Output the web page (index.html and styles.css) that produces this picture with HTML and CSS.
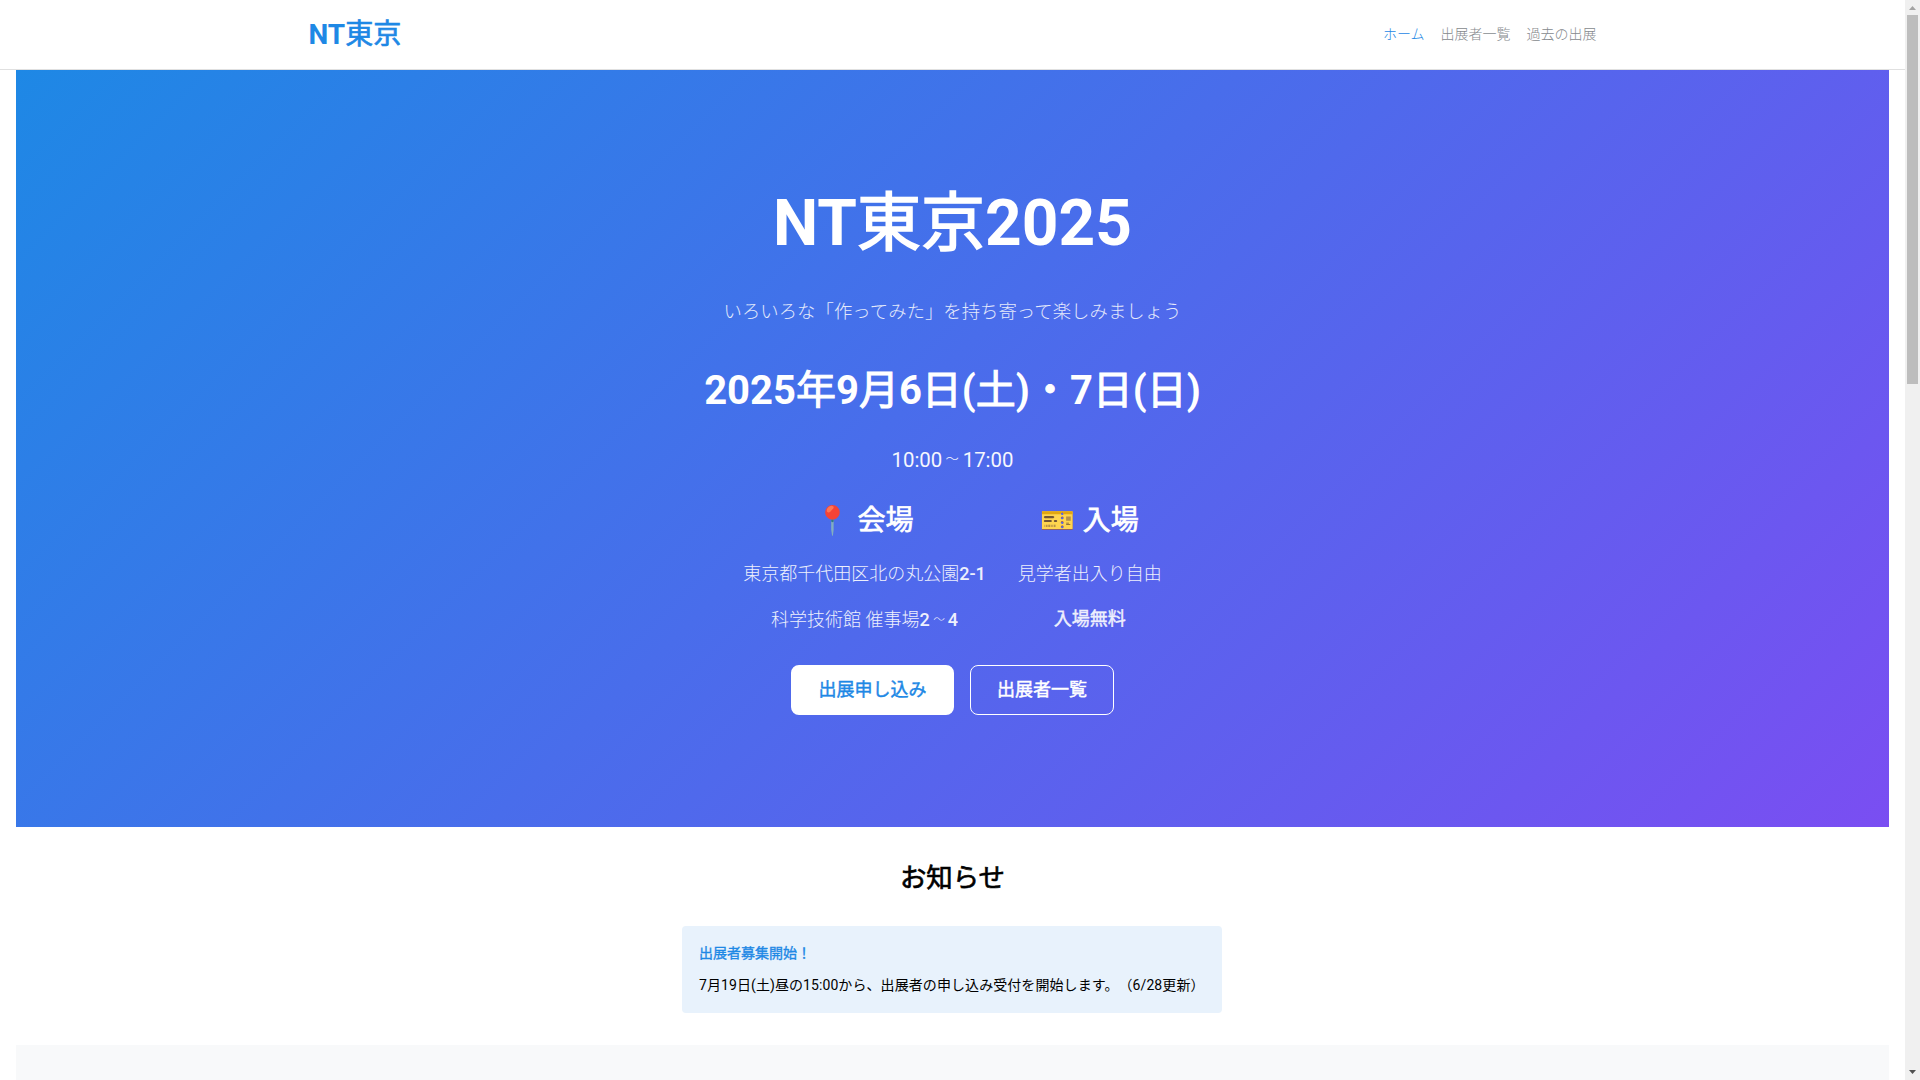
FILE: index.html
```html
<!DOCTYPE html>
<html lang="ja">
<head>
<meta charset="utf-8">
<title>NT東京2025</title>
<link rel="stylesheet" href="styles.css">
</head>
<body>
<header class="site-header">
  <div class="header-inner">
    <a class="logo" href="#">NT<span class="heavy">東京</span></a>
    <nav class="nav">
      <a class="nav-link active" href="#">ホーム</a>
      <a class="nav-link" href="#">出展者一覧</a>
      <a class="nav-link" href="#">過去の出展</a>
    </nav>
  </div>
</header>
<main class="main">
  <section class="hero">
    <h1 class="hero-title">NT<span class="heavy">東京</span>2025</h1>
    <p class="hero-sub">いろいろな「作ってみた」を持ち寄って楽しみましょう</p>
    <p class="hero-date">2025<span class="heavy">年</span>9<span class="heavy">月</span>6<span class="heavy">日</span>(<span class="heavy">土</span>)<span class="heavy">・</span>7<span class="heavy">日</span>(<span class="heavy">日</span>)</p>
    <p class="hero-time">10:00<span class="tilde">～</span>17:00</p>
    <div class="info">
      <div class="info-col">
        <h2 class="info-title"><span class="emoji">📍</span> <span class="heavy">会場</span></h2>
        <p class="info-line"><span class="plain">東京都千代田区北の丸公園</span>2-1</p>
        <p class="info-line"><span class="plain">科学技術館 催事場</span>2<span class="tilde">～</span>4</p>
      </div>
      <div class="info-col">
        <h2 class="info-title"><span class="emoji">🎫</span> <span class="heavy">入場</span></h2>
        <p class="info-line"><span class="plain">見学者出入り自由</span></p>
        <p class="info-line"><span class="heavy">入場無料</span></p>
      </div>
    </div>
    <div class="actions">
      <a class="btn btn-solid" href="#">出展申し込み</a>
      <a class="btn btn-outline" href="#">出展者一覧</a>
    </div>
  </section>
  <section class="news">
    <h2 class="news-title"><span class="heavy">お知らせ</span></h2>
    <div class="news-card">
      <h3 class="news-head"><span class="heavy">出展者募集開始！</span></h3>
      <p class="news-body">7月19日(土)昼の15:00から、出展者の申し込み受付を開始します。（6/28更新）</p>
    </div>
  </section>
  <section class="next"></section>
</main>
<aside class="scrollbar" aria-hidden="true">
  <svg class="scroll-btn" viewBox="0 0 15 15"><polygon points="4,10 11,10 7.5,6" fill="#a3a3a3"/></svg>
  <div class="scroll-thumb"></div>
  <div class="scroll-rest"></div>
  <svg class="scroll-btn" viewBox="0 0 15 15"><polygon points="4,5 11,5 7.5,9" fill="#505050"/></svg>
</aside>
</body>
</html>
```
FILE: styles.css
```css
* { box-sizing: border-box; }
body {
  margin: 0;
  padding-right: 15px;
  background: #fff;
  color: #000;
  font-family: Roboto, "Noto Sans CJK JP", "Noto Color Emoji", sans-serif;
  font-size: 16px;
  text-spacing-trim: space-all;
}
a { text-decoration: none; }
h1, h2, h3, p { margin: 0; }
.heavy { font-weight: 400; -webkit-text-stroke: .025em currentColor; }
.plain { font-weight: 300; }
.scrollbar {
  position: fixed;
  top: 0;
  right: 0;
  width: 15px;
  height: 100vh;
  display: flex;
  flex-direction: column;
  background: #f0f0f0;
}
.scroll-btn { display: block; width: 15px; height: 15px; flex: none; }
.scroll-thumb { flex: none; height: 369px; margin: 0 2px; background: #bdbdbd; }
.scroll-rest { flex: 1; }
.site-header { height: 70px; border-bottom: 1px solid #e0e0e0; background: #fff; }
.header-inner {
  max-width: 1320px;
  height: 100%;
  margin: 0 auto;
  padding: 0 16px 5px;
  display: flex;
  align-items: center;
  justify-content: space-between;
}
.logo { color: #1e88e5; font-size: 28px; font-weight: 700; }
.nav { display: flex; gap: 16px; padding-top: 2px; }
.nav-link { color: #85898d; font-size: 14px; font-weight: 300; }
.nav-link.active { color: #1e88e5; }
.main { padding: 0 16px; }
.hero {
  height: 757px;
  padding-top: 112px;
  background: linear-gradient(135deg, #1e88e5 0%, #7a4ef2 100%);
  color: #fff;
  text-align: center;
  display: flex;
  flex-direction: column;
  align-items: center;
}
.hero-title { font-size: 64px; font-weight: 700; line-height: 84px; }
.hero-sub { margin-top: 32px; font-size: 18.4px; line-height: 28px; opacity: .85; font-weight: 300; }
.hero-date { margin-top: 37px; font-size: 40px; font-weight: 700; line-height: 56px; }
.hero-time { margin-top: 25px; font-size: 20.4px; line-height: 28px; opacity: .95; }
.tilde { display: inline-block; font-family: "Noto Sans CJK SC", sans-serif; font-weight: 300; transform: scale(.65, .55); }
.info { margin-top: 27px; display: flex; gap: 32px; }
.info-title { font-size: 28px; font-weight: 700; line-height: 40px; margin-bottom: 18px; }
.emoji { font-weight: 400; }
.info-line { font-size: 18px; font-weight: 500; line-height: 29px; margin-bottom: 16px; opacity: .9; }
.actions { margin-top: 15px; display: flex; gap: 16px; }
.btn { height: 50px; padding: 0 25.5px; border: 2px solid #fff; border-radius: 8px; font-size: 18px; font-weight: 400; line-height: 46px; -webkit-text-stroke: .025em currentColor; }
.btn-solid { background: #fff; color: #1e88e5; }
.btn-outline { color: #fff; border-width: 1px; padding: 0 26px; line-height: 48px; }
.news { padding-top: 34px; height: 218px; display: flex; flex-direction: column; align-items: center; }
.news-title { font-size: 26.4px; line-height: 34px; }
.news-card { margin-top: 31px; margin-right: 1px; width: 540px; height: 87px; padding: 17px; background: #e8f2fc; border-radius: 4px; }
.news-head { font-size: 14px; font-weight: 400; line-height: 20px; color: #1e88e5; }
.news-body { margin-top: 12px; font-size: 14px; line-height: 20px; letter-spacing: .08px; }
.next { height: 1900px; background: #f8f9fa; }
```
